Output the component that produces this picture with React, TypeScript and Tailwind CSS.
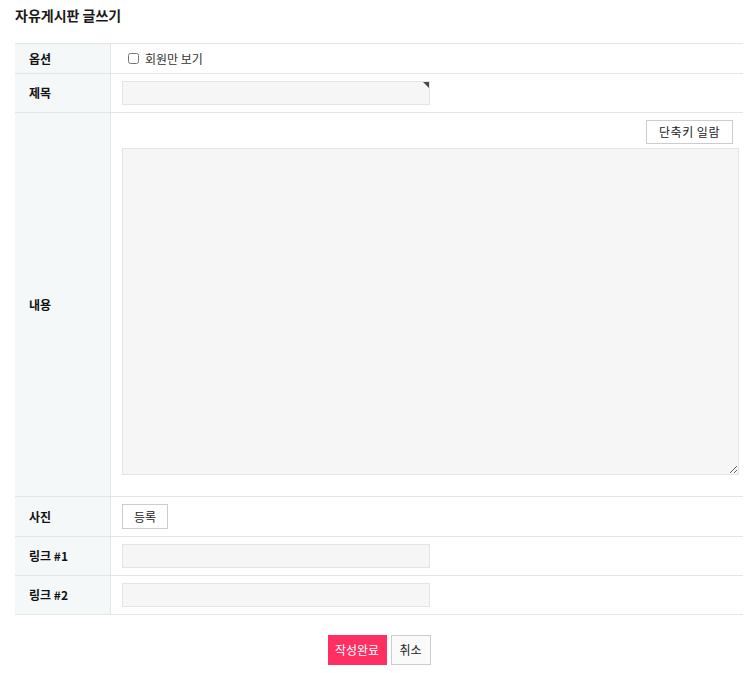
import React from 'react';

const font = { fontFamily: '"Noto Sans CJK KR", "Noto Sans", sans-serif' };

const Row: React.FC<{ label: string; h: string; children?: React.ReactNode }> = ({ label, h, children }) => (
  <div className={`flex border-b border-[#e5e5e5] ${h}`}>
    <div className="w-[96px] shrink-0 bg-[#f5f8f9] border-r border-[#e5e5e5] flex items-center pl-[14px] text-[12px] font-bold text-[#111]">
      {label}
    </div>
    <div className="flex-1 min-w-0 pl-[11px]">{children}</div>
  </div>
);

const Input: React.FC<{ marker?: boolean }> = ({ marker }) => (
  <div className="relative w-[308px] h-[24px] bg-[#f6f6f6] border border-[#e4e4e4]">
    {marker && (
      <span className="absolute top-0 right-0 w-0 h-0 border-t-[6px] border-t-[#4a4a45] border-l-[6px] border-l-transparent" />
    )}
  </div>
);

export default function App() {
  return (
    <div className="w-[756px] bg-white text-[#222]" style={font}>
      <h1 className="px-[15px] pt-[5px] h-[43px] text-[14px] font-bold text-[#1a1a1a] leading-[20px]">자유게시판 글쓰기</h1>

      <div className="mx-[15px] border-t border-[#e5e5e5] w-[728px]">
        <Row label="옵션" h="h-[30px]">
          <label className="flex items-center gap-[6px] h-full pl-[6px] text-[12px] text-[#333]">
            <input type="checkbox" className="w-[11px] h-[11px] m-0" />
            <span>회원만 보기</span>
          </label>
        </Row>
        <Row label="제목" h="h-[39px]">
          <div className="flex items-center h-full">
            <Input marker />
          </div>
        </Row>
        <Row label="내용" h="h-[384px]">
          <div className="flex flex-col h-full">
            <div className="flex justify-end pt-[7px] pr-[10px]">
              <button className="h-[24px] w-[87px] bg-white border border-[#ccc] text-[12px] text-[#222] tracking-[0.5px]">단축키 일람</button>
            </div>
            <textarea className="mt-[4px] w-[617px] h-[327px] bg-[#f6f6f6] border border-[#e4e4e4] resize-y" />
          </div>
        </Row>
        <Row label="사진" h="h-[40px]">
          <div className="flex items-center h-full">
            <button className="h-[25px] w-[46px] bg-white border border-[#ccc] text-[12px] text-[#222]">등록</button>
          </div>
        </Row>
        <Row label="링크 #1" h="h-[39px]">
          <div className="flex items-center h-full">
            <Input />
          </div>
        </Row>
        <Row label="링크 #2" h="h-[39px]">
          <div className="flex items-center h-full">
            <Input />
          </div>
        </Row>
      </div>

      <div className="flex justify-center gap-[4px] pt-[20px] pb-[8px] pl-[2px]">
        <button className="h-[30px] w-[59px] bg-[#ff3061] text-white text-[12px]">작성완료</button>
        <button className="h-[30px] w-[40px] bg-[#fafafa] border border-[#ccc] text-[12px] text-[#222]">취소</button>
      </div>
    </div>
  );
}
